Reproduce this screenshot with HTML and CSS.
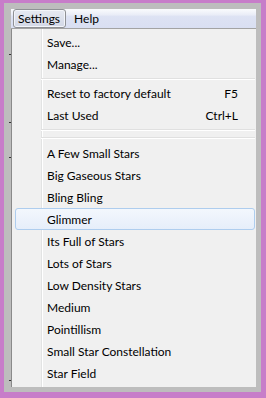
FILE: index.html
```html
<!DOCTYPE html>
<html lang="en">
<head>
    <meta charset="UTF-8">
    <meta name="viewport" content="width=device-width, initial-scale=1.0">
    <title>Settings Menu</title>
    <link rel="stylesheet" href="styles.css">
</head>
<body>
    <div id="frame">
        <div id="ruler">
            <span class="tick t1"></span>
            <span class="tick t2"></span>
            <span class="tick t3"></span>
            <span class="tick t4"></span>
        </div>
        <div id="window">
            <div id="menubar">
                <span class="top-item open">Settings</span>
                <span class="top-item">Help</span>
            </div>
            <ul id="menu">
                <li class="item"><span>Save...</span></li>
                <li class="item"><span>Manage...</span></li>
                <li class="sep short"></li>
                <li class="item"><span>Reset to factory default</span><span class="key">F5</span></li>
                <li class="item"><span>Last Used</span><span class="key">Ctrl+L</span></li>
                <li class="sep"></li>
                <li class="sep"></li>
                <li class="item"><span>A Few Small Stars</span></li>
                <li class="item"><span>Big Gaseous Stars</span></li>
                <li class="item"><span>Bling Bling</span></li>
                <li class="item hover"><span>Glimmer</span></li>
                <li class="item"><span>Its Full of Stars</span></li>
                <li class="item"><span>Lots of Stars</span></li>
                <li class="item"><span>Low Density Stars</span></li>
                <li class="item"><span>Medium</span></li>
                <li class="item"><span>Pointillism</span></li>
                <li class="item"><span>Small Star Constellation</span></li>
                <li class="item"><span>Star Field</span></li>
            </ul>
        </div>
    </div>
</body>
</html>
```

FILE: styles.css
```css
body {
    margin: 0;
    width: 266px;
    height: 398px;
    background: #c77dc9;
    font-family: "Lato", "Noto Sans", sans-serif;
    font-size: 12px;
    color: #000;
    box-sizing: border-box;
    padding: 3px 5px 6px 4px;
}
#frame {
    display: flex;
    height: 389px;
    background: #bdbdbd;
    padding: 6px 5px 5px 0;
    box-sizing: border-box;
}
#ruler {
    width: 7px;
    display: flex;
    flex-direction: column;
    align-items: flex-end;
}
.tick {
    width: 2px;
    height: 1px;
    background: #333;
}
.t1 { margin-top: 45px; }
.t2 { margin-top: 67px; }
.t3 { margin-top: 34px; }
.t4 { margin-top: 222px; height: 5px; border-top: 1px dotted #333; background: none; }
#window {
    flex: 1;
    display: flex;
    flex-direction: column;
}
#menubar {
    height: 19px;
    display: flex;
    align-items: center;
    padding-left: 2px;
    background: linear-gradient(#fafbfd 0, #eaedf7 30%, #dde2f3 40%, #d9dff2 100%);
    border-bottom: 1px solid #a3a3a3;
}
.top-item {
    padding: 0 6px 0 5px;
    height: 17px;
    line-height: 17px;
    border: 1px solid transparent;
}
.top-item.open {
    border-color: #8f9195;
    border-radius: 3px;
    background: linear-gradient(#e6e9f1, #d3d8e6);
    box-shadow: inset 0 0 0 1px #f3f5fa;
    padding: 0 5px 0 4px;
    margin-right: 2px;
}
#menu {
    flex: 1;
    list-style: none;
    margin: 0;
    padding: 2px 1px 0 3px;
    background-color: #f0f0f0;
    background-image: linear-gradient(90deg, transparent 29px, #e2e3e3 29px, #e2e3e3 30px, #fff 30px, #fff 31px, transparent 31px);
    border-left: 1px solid #8a8a8a;
}
.item {
    height: 20px;
    display: flex;
    align-items: center;
    justify-content: space-between;
    padding: 0 16px 0 31px;
    border: 1px solid transparent;
    border-radius: 3px;
}
.item.hover {
    border-color: #aecdee;
    background: linear-gradient(#f3f7fd, #e6eefa);
}
.sep {
    height: 8px;
    margin-left: 26px;
    background: linear-gradient(transparent 3px, #e0e0e0 3px, #e0e0e0 4px, #fff 4px, #fff 5px, transparent 5px);
}
.sep.short {
    height: 7px;
}
```
